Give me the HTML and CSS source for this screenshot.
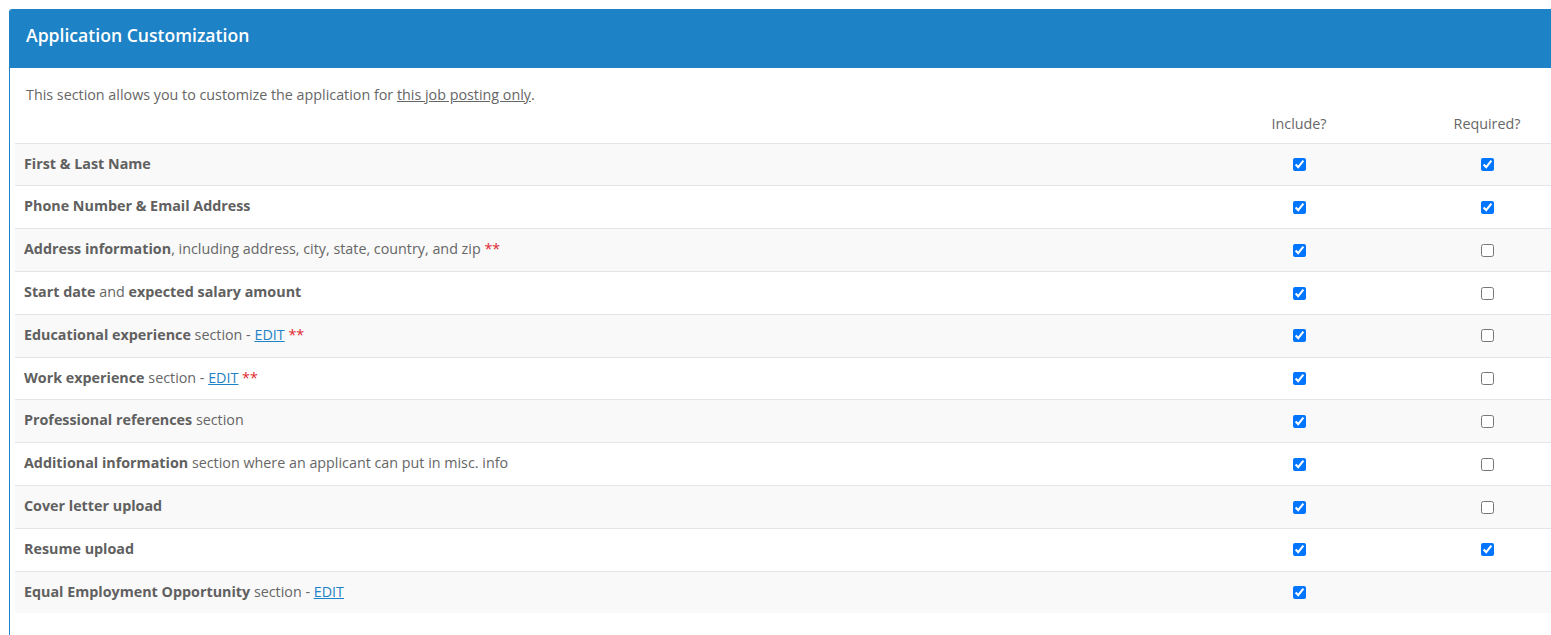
FILE: index.html
```html
<!DOCTYPE html>
<html lang="en">
<head>
<meta charset="utf-8">
<title>Application Customization</title>
<link rel="stylesheet" href="styles.css">
</head>
<body>
<div class="page">
  <section class="card">
    <header class="card-header">
      <h2 class="card-title">Application Customization</h2>
    </header>
    <div class="card-body">
      <p class="intro">This section allows you to customize the application for <u>this job posting only</u>.</p>
      <table class="fields">
        <thead>
          <tr>
            <th class="col-label"></th>
            <th class="col-include">Include?</th>
            <th class="col-required">Required?</th>
          </tr>
        </thead>
        <tbody>
          <tr>
            <td><b>First &amp; Last Name</b></td>
            <td class="chk"><input type="checkbox" checked></td>
            <td class="chk"><input type="checkbox" checked></td>
          </tr>
          <tr>
            <td><b>Phone Number &amp; Email Address</b></td>
            <td class="chk"><input type="checkbox" checked></td>
            <td class="chk"><input type="checkbox" checked></td>
          </tr>
          <tr>
            <td><b>Address information</b>, including address, city, state, country, and zip <span class="stars">**</span></td>
            <td class="chk"><input type="checkbox" checked></td>
            <td class="chk"><input type="checkbox"></td>
          </tr>
          <tr>
            <td><b>Start date</b> and <b>expected salary amount</b></td>
            <td class="chk"><input type="checkbox" checked></td>
            <td class="chk"><input type="checkbox"></td>
          </tr>
          <tr>
            <td><b>Educational experience</b> section - <a href="#" class="edit">EDIT</a> <span class="stars">**</span></td>
            <td class="chk"><input type="checkbox" checked></td>
            <td class="chk"><input type="checkbox"></td>
          </tr>
          <tr>
            <td><b>Work experience</b> section - <a href="#" class="edit">EDIT</a> <span class="stars">**</span></td>
            <td class="chk"><input type="checkbox" checked></td>
            <td class="chk"><input type="checkbox"></td>
          </tr>
          <tr>
            <td><b>Professional references</b> section</td>
            <td class="chk"><input type="checkbox" checked></td>
            <td class="chk"><input type="checkbox"></td>
          </tr>
          <tr>
            <td><b>Additional information</b> section where an applicant can put in misc. info</td>
            <td class="chk"><input type="checkbox" checked></td>
            <td class="chk"><input type="checkbox"></td>
          </tr>
          <tr>
            <td><b>Cover letter upload</b></td>
            <td class="chk"><input type="checkbox" checked></td>
            <td class="chk"><input type="checkbox"></td>
          </tr>
          <tr>
            <td><b>Resume upload</b></td>
            <td class="chk"><input type="checkbox" checked></td>
            <td class="chk"><input type="checkbox" checked></td>
          </tr>
          <tr>
            <td><b>Equal Employment Opportunity</b> section - <a href="#" class="edit">EDIT</a></td>
            <td class="chk"><input type="checkbox" checked></td>
            <td class="chk"></td>
          </tr>
        </tbody>
      </table>
    </div>
  </section>
</div>
</body>
</html>
```

FILE: styles.css
```css
html, body {
  margin: 0;
  padding: 0;
  background: #ffffff;
}

body {
  font-family: "Open Sans", "Liberation Sans", sans-serif;
  font-size: 14.32px;
  line-height: 20.8px;
  color: #666666;
}

.page {
  padding: 9px 0 0 9px;
}

.card {
  border-left: 1px solid #1e82c6;
  border-top-left-radius: 3px;
  overflow: hidden;
}

.card-header {
  background: #1e82c6;
  height: 59px;
  box-sizing: border-box;
  padding: 13px 0 0 16px;
}

.card-title {
  margin: 0;
  font-size: 17.6px;
  font-weight: 600;
  color: #ffffff;
  line-height: 26px;
}

.card-body {
  padding: 0 0 22px 5px;
}

.intro {
  margin: 0;
  padding: 17px 0 0 11px;
}

.intro u {
  text-decoration: underline;
}

.fields {
  width: 100%;
  border-collapse: collapse;
}

.fields th {
  font-weight: 400;
  padding: 8px 9px;
  text-align: center;
  color: #666666;
}

.fields .col-include {
  width: 248px;
  padding: 8px 0;
}

.fields .col-required {
  width: 128px;
  padding: 8px 0;
}

.fields td {
  border-top: 1px solid #e3e6e9;
  padding: 10px 9px 11px 9px;
  vertical-align: middle;
}

.fields tbody tr:nth-child(odd) td {
  background: #f9f9f9;
}

.fields b {
  font-weight: 700;
  color: #606060;
}

.fields td.chk {
  text-align: center;
  padding: 10px 0 11px;
}

.fields input[type="checkbox"] {
  margin: 0;
  width: 13px;
  height: 13px;
  vertical-align: middle;
}

.stars {
  color: #e0282e;
  font-weight: 400;
}

.edit {
  color: #1e82c6;
  text-decoration: underline;
}
```
